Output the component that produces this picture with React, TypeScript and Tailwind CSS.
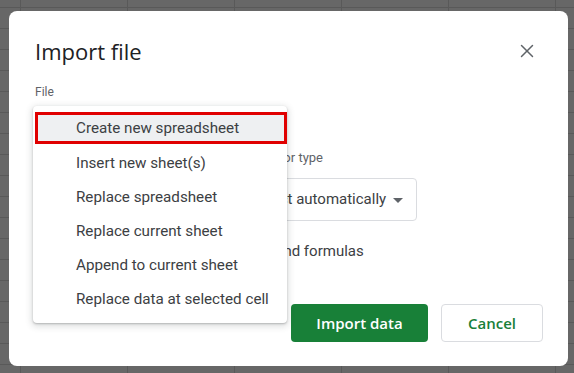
import { X } from "lucide-react";

const menuItems = [
  "Create new spreadsheet",
  "Insert new sheet(s)",
  "Replace spreadsheet",
  "Replace current sheet",
  "Append to current sheet",
  "Replace data at selected cell",
];

const roboto = "font-['Roboto',sans-serif]";
const openSans = "font-['Open_Sans',sans-serif]";

const SelectArrow = () => (
  <svg width="24" height="24" viewBox="0 0 24 24" className="shrink-0">
    <path d="M7 10l5 5 5-5z" fill="#5f6368" />
  </svg>
);

const App = () => {
  return (
    <div className="relative w-[574px] h-[373px] overflow-hidden bg-[#676767] bg-[linear-gradient(to_right,#595959_1px,transparent_1px),linear-gradient(to_bottom,#595959_1px,transparent_1px)] bg-[size:107px_21px] bg-[position:20px_7px]">
      {/* Import dialog */}
      <div className="absolute left-[9px] top-[11px] w-[559px] h-[355px] rounded-lg bg-white flex flex-col pl-[26px] pr-[25px] pt-[24px] pb-[24px]">
        {/* Header */}
        <div className="flex items-center justify-between h-[32px]">
          <h2 className={`${openSans} text-[22px] leading-8 text-[#202124]`}>
            Import file
          </h2>
          <button className="w-[24px] h-[24px] mr-[4px] flex items-center justify-center text-[#5f6368]">
            <X className="w-[22px] h-[22px]" strokeWidth={1.6} />
          </button>
        </div>

        {/* File */}
        <div className={`${roboto} mt-[17px] text-[12px] leading-4 text-[#5f6368]`}>
          File
        </div>
        <div className={`${roboto} mt-[4px] h-[24px] text-[14px] leading-6 text-[#202124]`}>
          data.csv
        </div>

        {/* Location + separator */}
        <div className="flex mt-[22px]">
          <div className="w-[201px]">
            <div className={`${roboto} text-[13px] leading-4 text-[#5f6368]`}>
              Import location
            </div>
            <div className="mt-[12px] w-[185px] h-[43px] border border-[#dadce0] rounded flex items-center justify-between pl-[12px] pr-[8px]">
              <span className={`${roboto} text-[15px] text-[#3c4043]`}>Create new</span>
              <SelectArrow />
            </div>
          </div>
          <div>
            <div className={`${roboto} pl-[3px] text-[13px] leading-4 text-[#5f6368]`}>
              Separator type
            </div>
            <div className="mt-[12px] w-[181px] h-[43px] border border-[#dadce0] rounded flex items-center justify-between pl-[12px] pr-[8px]">
              <span className={`${roboto} text-[15px] text-[#3c4043] whitespace-nowrap`}>
                Detect automatically
              </span>
              <SelectArrow />
            </div>
          </div>
        </div>

        {/* Checkbox */}
        <div className="flex items-center gap-[11px] mt-[18px] h-[24px]">
          <div className="w-[18px] h-[18px] rounded-sm bg-[#188038]" />
          <span className={`${roboto} text-[15px] text-[#3c4043] whitespace-nowrap`}>
            Convert text to numbers, dates, and formulas
          </span>
        </div>

        {/* Actions */}
        <div className="mt-auto flex justify-end gap-[13px]">
          <button
            className={`${openSans} w-[137px] h-[38px] rounded bg-[#188038] text-white text-[15px] font-semibold`}
          >
            Import data
          </button>
          <button
            className={`${openSans} w-[102px] h-[38px] rounded border border-[#dadce0] bg-white text-[#188038] text-[15px] font-semibold`}
          >
            Cancel
          </button>
        </div>

        {/* Open dropdown menu */}
        <div className="absolute left-[24px] top-[95px] w-[254px] h-[217px] bg-white rounded pt-[6px] shadow-[0_2px_6px_2px_rgba(60,64,67,0.15),0_1px_2px_rgba(60,64,67,0.3)]">
          {menuItems.map((item, i) =>
            i === 0 ? (
              <div key={item} className="h-[34px] pl-[2px]">
                <div
                  className={`${roboto} h-[32px] border-[3px] border-[#e00000] bg-[#eef0f2] flex items-center pl-[38px] text-[15.2px] text-[#3c4043]`}
                >
                  {item}
                </div>
              </div>
            ) : (
              <div
                key={item}
                className={`${roboto} h-[34px] flex items-center pl-[43px] text-[15.2px] text-[#3c4043]`}
              >
                {item}
              </div>
            )
          )}
        </div>
      </div>
    </div>
  );
};

export default App;
